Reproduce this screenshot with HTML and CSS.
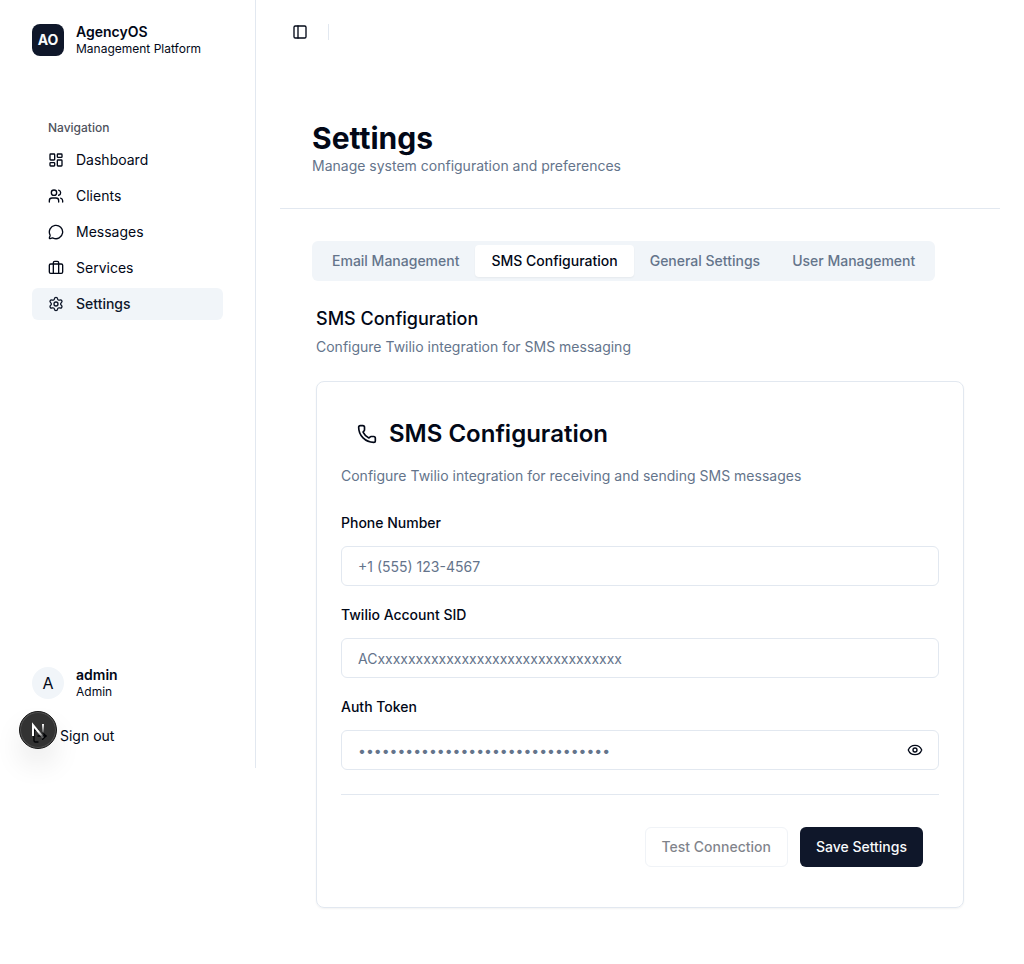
FILE: index.html
```html
<!DOCTYPE html>
<html lang="en">
<head>
<meta charset="utf-8">
<meta name="viewport" content="width=device-width, initial-scale=1">
<title>Settings - AgencyOS</title>
<link rel="stylesheet" href="styles.css">
</head>
<body>
<div class="app">
  <aside class="sidebar">
    <div class="brand">
      <div class="brand-mark">AO</div>
      <div class="stack">
        <span class="name">AgencyOS</span>
        <span class="caption">Management Platform</span>
      </div>
    </div>
    <nav class="nav" aria-label="Navigation">
      <div class="nav-title">Navigation</div>
      <a class="nav-link" href="#dashboard">
        <svg class="icon" viewBox="0 0 24 24"><rect width="7" height="9" x="3" y="3" rx="1"/><rect width="7" height="5" x="14" y="3" rx="1"/><rect width="7" height="9" x="14" y="12" rx="1"/><rect width="7" height="5" x="3" y="16" rx="1"/></svg>
        Dashboard
      </a>
      <a class="nav-link" href="#clients">
        <svg class="icon" viewBox="0 0 24 24"><path d="M16 21v-2a4 4 0 0 0-4-4H6a4 4 0 0 0-4 4v2"/><circle cx="9" cy="7" r="4"/><path d="M22 21v-2a4 4 0 0 0-3-3.87"/><path d="M16 3.128a4 4 0 0 1 0 7.744"/></svg>
        Clients
      </a>
      <a class="nav-link" href="#messages">
        <svg class="icon" viewBox="0 0 24 24"><path d="M2.992 16.342a2 2 0 0 1 .094 1.167l-1.065 3.29a1 1 0 0 0 1.236 1.168l3.413-.998a2 2 0 0 1 1.099.092 10 10 0 1 0-4.777-4.719"/></svg>
        Messages
      </a>
      <a class="nav-link" href="#services">
        <svg class="icon" viewBox="0 0 24 24"><path d="M16 20V4a2 2 0 0 0-2-2h-4a2 2 0 0 0-2 2v16"/><rect width="20" height="14" x="2" y="6" rx="2"/></svg>
        Services
      </a>
      <a class="nav-link nav-link-active" href="#settings" aria-current="page">
        <svg class="icon" viewBox="0 0 24 24"><path d="M9.671 4.136a2.34 2.34 0 0 1 4.659 0 2.34 2.34 0 0 0 3.319 1.915 2.34 2.34 0 0 1 2.33 4.033 2.34 2.34 0 0 0 0 3.831 2.34 2.34 0 0 1-2.33 4.033 2.34 2.34 0 0 0-3.319 1.915 2.34 2.34 0 0 1-4.659 0 2.34 2.34 0 0 0-3.32-1.915 2.34 2.34 0 0 1-2.33-4.033 2.34 2.34 0 0 0 0-3.831A2.34 2.34 0 0 1 6.35 6.051a2.34 2.34 0 0 0 3.319-1.915"/><circle cx="12" cy="12" r="3"/></svg>
        Settings
      </a>
    </nav>
    <div class="account">
      <div class="user">
        <div class="avatar">A</div>
        <div class="stack">
          <span class="name">admin</span>
          <span class="caption">Admin</span>
        </div>
      </div>
      <button class="sign-out" type="button">
        <svg class="icon" viewBox="0 0 24 24"><path d="M9 21H5a2 2 0 0 1-2-2V5a2 2 0 0 1 2-2h4"/><path d="m16 17 5-5-5-5"/><path d="M21 12H9"/></svg>
        Sign out
      </button>
      <button class="dev-badge" type="button" aria-label="Open developer tools">
        <svg class="dev-mark" viewBox="0 0 36 36" fill="none">
          <defs>
            <linearGradient id="diag" x1="19" y1="19" x2="25" y2="26" gradientUnits="userSpaceOnUse"><stop stop-color="#fff"/><stop offset="1" stop-color="#fff" stop-opacity="0"/></linearGradient>
            <linearGradient id="stem" x1="23" y1="12" x2="23" y2="22" gradientUnits="userSpaceOnUse"><stop stop-color="#fff"/><stop offset="1" stop-color="#fff" stop-opacity="0"/></linearGradient>
          </defs>
          <path d="M13 24V13L23.500 26" stroke="url(#diag)" stroke-width="2"/>
          <path d="M23 12V23" stroke="url(#stem)" stroke-width="2"/>
        </svg>
      </button>
    </div>
  </aside>

  <div class="content">
    <header class="topbar">
      <button class="icon-button" type="button" aria-label="Toggle sidebar">
        <svg class="icon" viewBox="0 0 24 24"><rect width="18" height="18" x="3" y="3" rx="2"/><path d="M9 3v18"/></svg>
      </button>
      <span class="topbar-rule"></span>
    </header>
    <main class="page">
      <div class="page-head">
        <h1 class="page-title">Settings</h1>
        <p class="muted">Manage system configuration and preferences</p>
      </div>
      <div class="page-body">
        <div class="tabs" role="tablist">
          <button class="tab" type="button" role="tab" aria-selected="false">Email Management</button>
          <button class="tab tab-active" type="button" role="tab" aria-selected="true">SMS Configuration</button>
          <button class="tab" type="button" role="tab" aria-selected="false">General Settings</button>
          <button class="tab" type="button" role="tab" aria-selected="false">User Management</button>
        </div>
        <section class="panel" role="tabpanel">
          <div class="panel-head">
            <h2 class="panel-title">SMS Configuration</h2>
            <p class="muted">Configure Twilio integration for SMS messaging</p>
          </div>
          <form class="card">
            <div class="card-head">
              <h3 class="card-title">
                <svg class="icon icon-large" viewBox="0 0 24 24"><path d="M13.832 16.568a1 1 0 0 0 1.213-.303l.355-.465A2 2 0 0 1 17 15h3a2 2 0 0 1 2 2v3a2 2 0 0 1-2 2A18 18 0 0 1 2 4a2 2 0 0 1 2-2h3a2 2 0 0 1 2 2v3a2 2 0 0 1-.8 1.6l-.468.351a1 1 0 0 0-.292 1.233 14 14 0 0 0 6.392 6.384"/></svg>
                SMS Configuration
              </h3>
              <p class="muted">Configure Twilio integration for receiving and sending SMS messages</p>
            </div>
            <div class="fields">
              <div class="field">
                <label class="label" for="phone">Phone Number</label>
                <input class="input" id="phone" type="tel" placeholder="+1 (555) 123-4567">
              </div>
              <div class="field">
                <label class="label" for="sid">Twilio Account SID</label>
                <input class="input" id="sid" type="text" placeholder="ACxxxxxxxxxxxxxxxxxxxxxxxxxxxxxxxx">
              </div>
              <div class="field">
                <label class="label" for="token">Auth Token</label>
                <div class="secret">
                  <input class="input" id="token" type="password" placeholder="••••••••••••••••••••••••••••••••">
                  <button class="reveal" type="button" aria-label="Show token">
                    <svg class="icon" viewBox="0 0 24 24"><path d="M2.062 12.348a1 1 0 0 1 0-.696 10.750 10.750 0 0 1 19.876 0 1 1 0 0 1 0 .696 10.750 10.750 0 0 1-19.876 0"/><circle cx="12" cy="12" r="3"/></svg>
                  </button>
                </div>
              </div>
            </div>
            <div class="actions">
              <button class="button button-outline" type="button" disabled>Test Connection</button>
              <button class="button button-primary" type="submit">Save Settings</button>
            </div>
          </form>
        </section>
      </div>
    </main>
  </div>
</div>
</body>
</html>
```
FILE: styles.css
```css
:root {
  --ink: #020817;
  --navy: #0f172a;
  --muted: #64748b;
  --line: #e2e8f0;
  --soft: #f1f5f9;
}

*, *::before, *::after { box-sizing: border-box; }

body {
  margin: 0;
  background: #fff;
  color: var(--ink);
  font-family: Inter, "Liberation Sans", sans-serif;
  font-size: 14px;
  line-height: 20px;
}

h1, h2, h3, p { margin: 0; }

button, input { font: inherit; color: inherit; }

button {
  padding: 0;
  border: 0;
  background: none;
  cursor: pointer;
}

.icon {
  width: 16px;
  height: 16px;
  flex: none;
  fill: none;
  stroke: currentColor;
  stroke-width: 2;
  stroke-linecap: round;
  stroke-linejoin: round;
}

.icon-large { width: 20px; height: 20px; }

.muted { color: var(--muted); }

.app { display: flex; align-items: flex-start; }

/* Sidebar */
.sidebar {
  display: flex;
  flex-direction: column;
  flex: none;
  width: 256px;
  min-height: 768px;
  padding: 23px 32px 16px;
  border-right: 1px solid var(--line);
}

.brand, .user { display: flex; align-items: center; gap: 12px; }

.brand-mark {
  display: grid;
  place-items: center;
  width: 32px;
  height: 32px;
  border-radius: 8px;
  background: var(--navy);
  color: #f8fafc;
  font-weight: 700;
}

.stack { display: flex; flex-direction: column; }
.name { font-weight: 600; line-height: 18px; }
.caption { font-size: 12px; line-height: 16px; }

.nav {
  display: flex;
  flex-direction: column;
  gap: 4px;
  margin-top: 55px;
}

.nav-title {
  padding: 8px 16px 4px;
  color: #4e525d;
  font-size: 12px;
  font-weight: 500;
  line-height: 16px;
}

.nav-link {
  display: flex;
  align-items: center;
  gap: 12px;
  height: 32px;
  padding: 0 16px;
  border-radius: 6px;
  color: inherit;
  text-decoration: none;
}

.nav-link-active { background: var(--soft); color: var(--navy); font-weight: 500; }

.account { position: relative; margin-top: auto; }

.avatar {
  display: grid;
  place-items: center;
  width: 32px;
  height: 32px;
  border-radius: 50%;
  background: var(--soft);
  font-size: 16px;
}

.sign-out {
  display: flex;
  align-items: center;
  gap: 12px;
  height: 32px;
  margin-top: 20px;
}

.dev-badge {
  position: absolute;
  left: -13px;
  bottom: 3px;
  display: grid;
  place-items: center;
  width: 38px;
  height: 38px;
  border: 1px solid #171717;
  border-radius: 50%;
  background: rgba(0, 0, 0, 0.8);
  box-shadow: inset 0 0 0 1px rgba(255, 255, 255, 0.15), 0 16px 32px -8px rgba(0, 0, 0, 0.24);
}

.dev-mark { width: 36px; height: 36px; }

/* Content */
.content { flex: 1; min-width: 0; }

.topbar {
  display: flex;
  align-items: center;
  gap: 12px;
  height: 64px;
  padding: 0 28px;
}

.icon-button { display: grid; place-items: center; padding: 0 8px; height: 28px; }
.topbar-rule { width: 1px; height: 16px; background: var(--line); }

.page { padding: 24px; }

.page-head { padding: 32px; border-bottom: 1px solid var(--line); }
.page-title { font-size: 30px; font-weight: 700; line-height: 36px; }

.page-body { padding: 32px; }

.tabs {
  display: inline-flex;
  padding: 4px;
  border-radius: 6px;
  background: var(--soft);
}

.tab {
  height: 32px;
  padding: 0 16px;
  border-radius: 4px;
  color: var(--muted);
  font-weight: 500;
  white-space: nowrap;
}

.tab-active {
  background: #fff;
  color: var(--ink);
  box-shadow: 0 1px 2px rgba(0, 0, 0, 0.05);
}

.panel {
  display: flex;
  flex-direction: column;
  gap: 24px;
  padding: 24px 4px 0;
}

.panel-head { display: flex; flex-direction: column; gap: 4px; }
.panel-title { font-size: 18px; font-weight: 500; line-height: 28px; }

.card {
  padding: 24px;
  border: 1px solid var(--line);
  border-radius: 8px;
  box-shadow: 0 1px 2px rgba(0, 0, 0, 0.05);
}

.card-head { display: flex; flex-direction: column; gap: 4px; margin-bottom: 24px; }

.card-title {
  display: flex;
  align-items: center;
  gap: 12px;
  padding: 16px;
  font-size: 24px;
  font-weight: 600;
  line-height: 24px;
}

.fields {
  display: flex;
  flex-direction: column;
  gap: 16px;
  padding-bottom: 24px;
  border-bottom: 1px solid var(--line);
}

.field { display: flex; flex-direction: column; gap: 10px; }
.label { font-weight: 500; line-height: 26px; }

.input {
  display: block;
  width: 100%;
  height: 40px;
  padding: 0 16px;
  border: 1px solid var(--line);
  border-radius: 6px;
  background: #fff;
}

.input::placeholder { color: var(--muted); opacity: 1; }

.secret { position: relative; }

.reveal {
  position: absolute;
  inset: 0 0 0 auto;
  display: grid;
  place-items: center;
  width: 48px;
}

.actions {
  display: flex;
  justify-content: flex-end;
  gap: 12px;
  padding: 32px 16px 16px;
}

.button {
  height: 40px;
  padding: 0 16px;
  border-radius: 6px;
  font-weight: 500;
}

.button-outline { border: 1px solid var(--line); background: #fff; }
.button-outline:disabled { opacity: 0.5; cursor: default; }
.button-primary { background: var(--navy); color: #f8fafc; }
```
